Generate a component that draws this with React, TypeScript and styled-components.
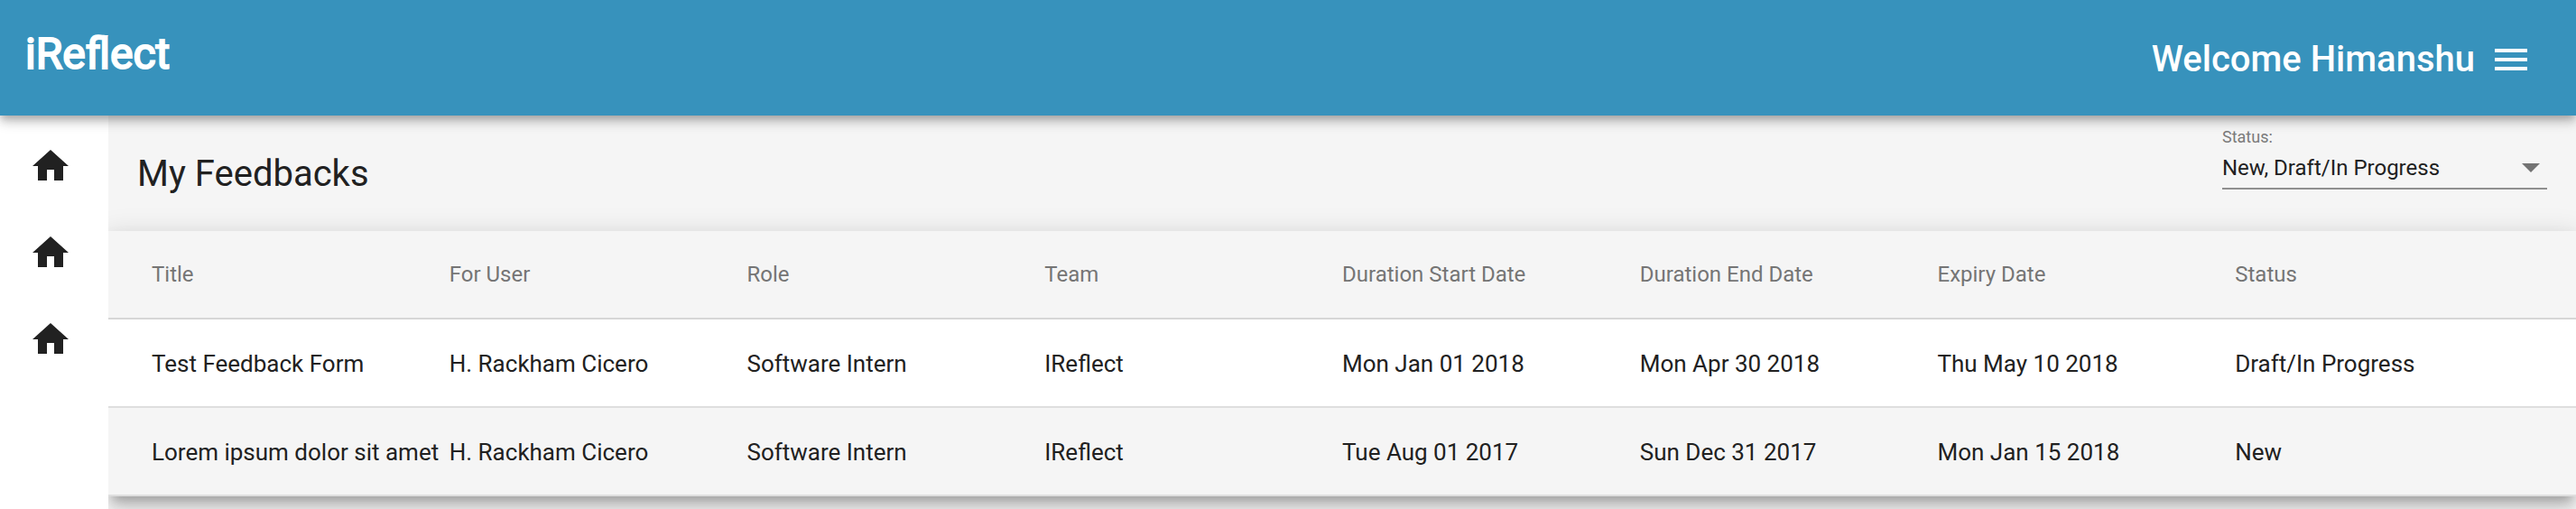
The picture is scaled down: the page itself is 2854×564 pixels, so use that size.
import React from "react";
import styled, { createGlobalStyle } from "styled-components";

const GlobalStyle = createGlobalStyle`
  *, *::before, *::after { box-sizing: border-box; }
  body {
    margin: 0;
    background: #ffffff;
    color: #212121;
    font-family: Roboto, "Liberation Sans", sans-serif;
    font-size: 26px;
  }
`;

const Page = styled.div`
  display: flex;
  flex-direction: column;
  min-height: 100vh;
`;

const TopBar = styled.header`
  position: relative;
  z-index: 2;
  display: flex;
  align-items: center;
  justify-content: space-between;
  height: 128px;
  padding: 0 48px 0 28px;
  background: #3792bc;
  color: #ffffff;
  box-shadow: 0 4px 8px -2px rgba(0, 0, 0, 0.2),
    0 8px 10px 0 rgba(0, 0, 0, 0.14), 0 2px 20px 0 rgba(0, 0, 0, 0.12);
`;

const Brand = styled.a`
  padding-bottom: 8px;
  color: inherit;
  font-size: 48px;
  font-weight: 400;
  line-height: 56px;
  text-decoration: none;
  -webkit-text-stroke: 2px currentColor;
`;

const UserArea = styled.div`
  display: flex;
  align-items: center;
  gap: 16px;
  padding-top: 4px;
  font-size: 40px;
  font-weight: 500;
  line-height: 48px;
`;

const IconButton = styled.button`
  display: flex;
  padding: 0;
  border: 0;
  background: none;
  color: inherit;
  cursor: pointer;
`;

const Icon = styled.svg`
  display: block;
  width: 48px;
  height: 48px;
  fill: currentColor;
`;

const Body = styled.div`
  display: flex;
  flex: 1;
`;

const SideNav = styled.nav`
  display: flex;
  flex-direction: column;
  gap: 48px;
  flex: none;
  width: 120px;
  padding: 32px;
`;

const NavLink = styled.a`
  display: block;
  width: 48px;
  color: inherit;
`;

const Main = styled.main`
  flex: 1;
  min-width: 0;
  overflow: hidden;
`;

const TitleBar = styled.div`
  display: flex;
  align-items: flex-start;
  justify-content: space-between;
  height: 128px;
  padding: 0 32px;
  background: #f5f5f5;
`;

const Title = styled.h1`
  margin: 0;
  font-size: 40px;
  font-weight: 400;
  line-height: 130px;
`;

const Field = styled.div`
  display: flex;
  flex-direction: column;
  width: 360px;
  padding-top: 12px;
`;

const FieldLabel = styled.label`
  color: #7a7a7a;
  font-size: 18px;
  line-height: 24px;
`;

const SelectBox = styled.div`
  display: grid;
  align-items: center;
  border-bottom: 2px solid #8f8f8f;
`;

const Select = styled.select`
  grid-area: 1 / 1;
  width: 100%;
  height: 44px;
  padding: 0 40px 0 0;
  border: 0;
  background: none;
  color: inherit;
  font-family: inherit;
  font-size: 24px;
  appearance: none;
`;

const Caret = styled.svg`
  grid-area: 1 / 1;
  justify-self: end;
  width: 20px;
  height: 10px;
  margin-right: 8px;
  fill: #737373;
  pointer-events: none;
`;

const TableCard = styled.div`
  background: #f5f5f5;
  box-shadow: 0 10px 10px -6px rgba(0, 0, 0, 0.2),
    0 16px 20px 2px rgba(0, 0, 0, 0.14), 0 6px 28px 4px rgba(0, 0, 0, 0.12);
`;

const Table = styled.table`
  width: 100%;
  border-collapse: separate;
  border-spacing: 0;
  table-layout: fixed;
`;

const EdgeCol = styled.col`
  width: 48px;
`;

const Row = styled.tr<{ $tint?: boolean }>`
  background: ${(p) => (p.$tint ? "#f5f5f5" : "#ffffff")};
`;

const HeadCell = styled.th`
  height: 98px;
  padding: 0;
  border-bottom: 2px solid #d6d6d6;
  color: #757575;
  font-size: 24px;
  font-weight: 400;
  text-align: left;
  white-space: nowrap;
`;

const Cell = styled.td`
  height: 98px;
  padding: 2px 0 0;
  border-bottom: 2px solid #dedede;
  white-space: nowrap;
`;

const columns = [
  "Title",
  "For User",
  "Role",
  "Team",
  "Duration Start Date",
  "Duration End Date",
  "Expiry Date",
  "Status",
];

const feedbacks = [
  [
    "Test Feedback Form",
    "H. Rackham Cicero",
    "Software Intern",
    "IReflect",
    "Mon Jan 01 2018",
    "Mon Apr 30 2018",
    "Thu May 10 2018",
    "Draft/In Progress",
  ],
  [
    "Lorem ipsum dolor sit amet",
    "H. Rackham Cicero",
    "Software Intern",
    "IReflect",
    "Tue Aug 01 2017",
    "Sun Dec 31 2017",
    "Mon Jan 15 2018",
    "New",
  ],
];

const HomeIcon = () => (
  <Icon viewBox="0 0 24 24" aria-hidden="true">
    <path d="M10 20v-6h4v6h5v-8h3L12 3 2 12h3v8z" />
  </Icon>
);

const MenuIcon = () => (
  <Icon viewBox="0 0 24 24" aria-hidden="true">
    <path d="M3 18h18v-2H3v2zm0-5h18v-2H3v2zm0-7v2h18V6H3z" />
  </Icon>
);

export default function App() {
  return (
    <Page>
      <GlobalStyle />
      <TopBar>
        <Brand href="#">iReflect</Brand>
        <UserArea>
          <span>Welcome Himanshu</span>
          <IconButton type="button" aria-label="Menu">
            <MenuIcon />
          </IconButton>
        </UserArea>
      </TopBar>
      <Body>
        <SideNav>
          {[1, 2, 3].map((n) => (
            <NavLink key={n} href="#" aria-label="Home">
              <HomeIcon />
            </NavLink>
          ))}
        </SideNav>
        <Main>
          <TitleBar>
            <Title>My Feedbacks</Title>
            <Field>
              <FieldLabel htmlFor="status">Status:</FieldLabel>
              <SelectBox>
                <Select id="status" defaultValue="open">
                  <option value="open">New, Draft/In Progress</option>
                </Select>
                <Caret viewBox="0 0 20 10" aria-hidden="true">
                  <path d="M0 0h20L10 10z" />
                </Caret>
              </SelectBox>
            </Field>
          </TitleBar>
          <TableCard>
            <Table>
              <colgroup>
                <EdgeCol />
                {columns.map((c) => (
                  <col key={c} />
                ))}
                <EdgeCol />
              </colgroup>
              <thead>
                <Row $tint>
                  <HeadCell as="td" />
                  {columns.map((c) => (
                    <HeadCell key={c} scope="col">
                      {c}
                    </HeadCell>
                  ))}
                  <HeadCell as="td" />
                </Row>
              </thead>
              <tbody>
                {feedbacks.map((cells, i) => (
                  <Row key={cells[0]} $tint={i % 2 === 1}>
                    <Cell />
                    {cells.map((text, j) => (
                      <Cell key={columns[j]}>{text}</Cell>
                    ))}
                    <Cell />
                  </Row>
                ))}
              </tbody>
            </Table>
          </TableCard>
        </Main>
      </Body>
    </Page>
  );
}
